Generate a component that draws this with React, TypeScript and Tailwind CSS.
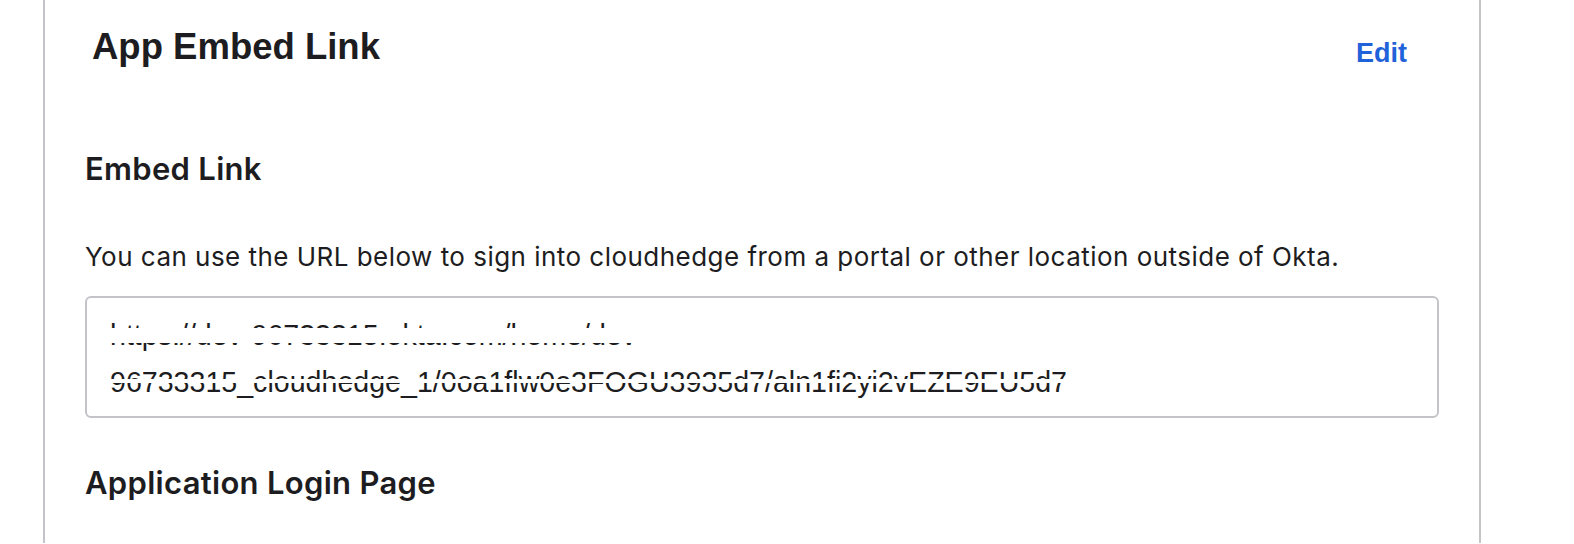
import { useState } from "react";

const EMBED_URL =
  "https://dev-96733315.okta.com/home/dev-96733315_cloudhedge_1/0oa1flw0e3FOGU3935d7/aln1fi2yi2vEZE9EU5d7";

function App() {
  const [url] = useState(EMBED_URL);

  return (
    <div className="min-h-screen bg-white pl-[43px] pr-[93px] text-[#1d1d21]">
      <section className="border-x-2 border-[#c4c4c8] px-[40px] pt-[22px] pb-10">
        <header className="flex items-start justify-between">
          <h2 className="pl-[7px] font-['Liberation_Sans',Arial,sans-serif] text-[36.5px] font-bold leading-[50px]">
            App Embed Link
          </h2>
          <a
            href="#"
            className="mt-[11px] mr-[32px] font-['Liberation_Sans',Arial,sans-serif] text-[27px] font-bold leading-[40px] text-[#1f62d9]"
          >
            Edit
          </a>
        </header>

        <h3 className="mt-[76px] font-['Inter',sans-serif] text-[31px] font-semibold leading-[40px] tracking-[0.3px]">
          Embed Link
        </h3>
        <p className="mt-[50px] font-['Inter',sans-serif] text-[26px] leading-[36px] tracking-[0.47px]">
          You can use the URL below to sign into cloudhedge from a portal or other location outside of
          Okta.
        </p>

        <div className="relative mt-[21px]">
          <textarea
            readOnly
            value={url}
            rows={2}
            className="block h-[122px] w-full resize-none rounded-md border-2 border-[#c4c4c8] bg-white px-[23px] pt-[14px] font-['Liberation_Sans',Arial,sans-serif] text-[28.6px] leading-[47px] text-[#1d1d21] outline-none"
          />
          {/* masked bands over the link */}
          <div className="pointer-events-none absolute left-[10px] right-[10px] top-[32px] h-[15px] bg-white" />
          <div className="pointer-events-none absolute left-[10px] right-[10px] top-[83px] h-[4px] bg-white" />
        </div>

        <h3 className="mt-[45px] font-['Inter',sans-serif] text-[31px] font-semibold leading-[40px] tracking-[0.3px]">
          Application Login Page
        </h3>
      </section>
    </div>
  );
}

export default App;
